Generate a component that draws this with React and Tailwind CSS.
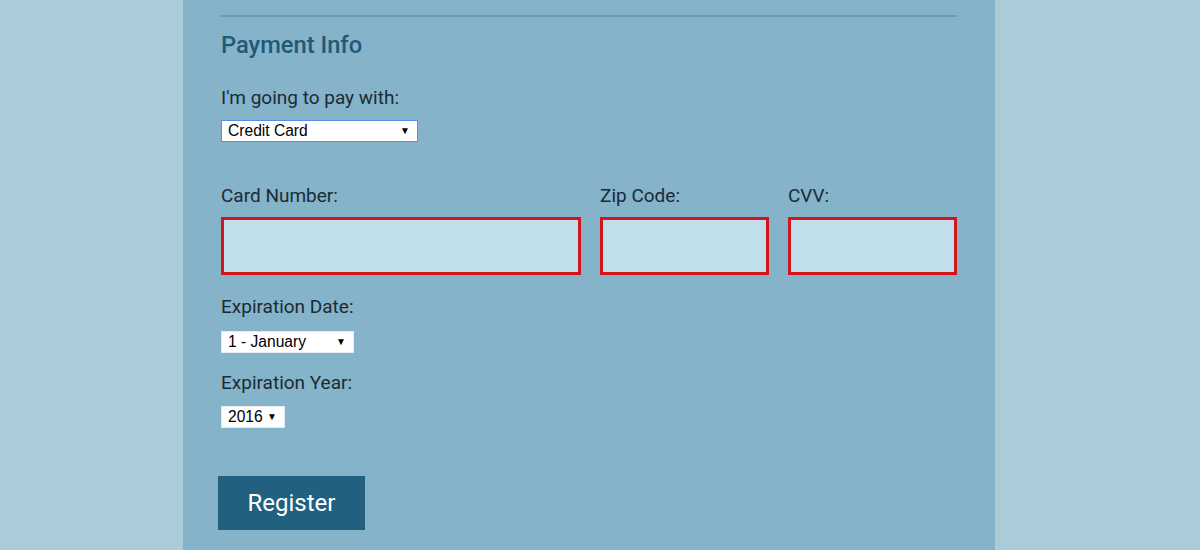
import React from 'react';

const labelCls = "block text-[19px] leading-[22px] text-[#1b2b35]";

// Fake native select box so the drawn look stays fixed
const FakeSelect = ({ value, width, focused = false }) => (
  <div
    className={`flex items-center justify-between h-[22px] bg-white pl-[6px] pr-[7px] text-[15.6px] text-black ${width} ${
      focused ? "border border-[#5b8ee0]" : "border border-[#e4ecf0]"
    }`}
    style={{ fontFamily: '"Liberation Sans", Arial, sans-serif' }}
  >
    <span className="leading-none">{value}</span>
    <span className="text-[10px] leading-none">▼</span>
  </div>
);

const Field = ({ label, width }) => (
  <div className={width}>
    <label className={labelCls}>{label}</label>
    <div className="mt-[10px] h-[58px] bg-[#c1dfea] border-[3px] border-[#d4141c]" />
  </div>
);

export default function App() {
  return (
    <div
      className="h-[550px] overflow-hidden bg-[#aacbd8]"
      style={{ fontFamily: 'Roboto, "Noto Sans", sans-serif' }}
    >
      <div className="ml-[183px] w-[812px] h-full bg-[#84b3ca] px-[38px] pt-[15px]">
        <div className="h-[2px] bg-[#6a9ab4]" />

        <h2 className="mt-[14px] text-[23.7px] leading-[28px] font-medium text-[#1f5a78]">Payment Info</h2>

        <div className="mt-[28px]">
          <label className={labelCls}>I'm going to pay with:</label>
          <div className="mt-[11px]">
            <FakeSelect value="Credit Card" width="w-[197px]" focused />
          </div>
        </div>

        <div className="mt-[43px] flex gap-[19px]">
          <Field label="Card Number:" width="w-[360px]" />
          <Field label="Zip Code:" width="w-[169px]" />
          <Field label="CVV:" width="w-[169px]" />
        </div>

        <div className="mt-[21px]">
          <label className={labelCls}>Expiration Date:</label>
          <div className="mt-[13px]">
            <FakeSelect value="1 - January" width="w-[133px]" />
          </div>
        </div>

        <div className="mt-[19px]">
          <label className={labelCls}>Expiration Year:</label>
          <div className="mt-[12px]">
            <FakeSelect value="2016" width="w-[64px]" />
          </div>
        </div>

        <button className="mt-[48px] -ml-[3px] w-[147px] h-[54px] bg-[#22607f] text-white text-[24px]">
          Register
        </button>
      </div>
    </div>
  );
}
